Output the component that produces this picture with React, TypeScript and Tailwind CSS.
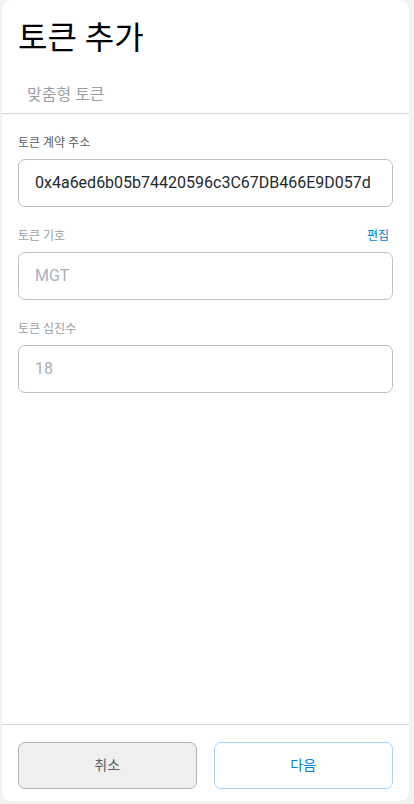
import React from "react";

const font = { fontFamily: "Roboto, 'Noto Sans CJK KR', sans-serif" };

function Field({
  label,
  value,
  dim,
  action,
}: {
  label: string;
  value: string;
  dim?: boolean;
  action?: string;
}) {
  return (
    <div className="flex flex-col">
      <div className="flex h-4 items-center justify-between">
        <span className={`text-[12px] ${dim ? "text-[#9a9fa5]" : "text-[#5b5f63]"}`}>{label}</span>
        {action && <span className="mr-[4px] text-[12px] text-[#037dd6]">{action}</span>}
      </div>
      <div className="mt-2 flex h-[48px] items-center rounded-[7px] border border-[#bbc0c5] bg-white pl-4">
        <span className={`text-[16px] ${dim ? "text-[#a9b0b7]" : "text-[#24292e]"}`}>{value}</span>
      </div>
    </div>
  );
}

export default function App() {
  return (
    <div className="min-h-[804px] w-[414px] bg-[#f2f2f2] pl-[2px]" style={font}>
      <div className="flex h-[801px] w-[407px] flex-col rounded-[9px] bg-white">
        <div className="px-4 pt-[18px]">
          <h1 className="text-[32px] leading-[40px] text-black">토큰 추가</h1>
        </div>
        <div className="mt-[25px] border-b border-[#d6d9dc] pb-[6px] pl-[25px]">
          <span className="text-[16px] leading-6 text-[#9a9fa5]">맞춤형 토큰</span>
        </div>
        <div className="flex flex-1 flex-col gap-[21px] px-4 pt-[21px]">
          <Field label="토큰 계약 주소" value="0x4a6ed6b05b74420596c3C67DB466E9D057d" />
          <Field label="토큰 기호" value="MGT" dim action="편집" />
          <Field label="토큰 십진수" value="18" dim />
        </div>
        <div className="flex gap-[17px] border-t border-[#d6d9dc] px-4 pb-[12px] pt-[17px]">
          <button className="flex h-[47px] w-[179px] items-center justify-center rounded-[7px] border border-[#b5b5b5] bg-[#efefef] text-[14px] text-[#5b5f63]">
            취소
          </button>
          <button className="flex h-[47px] w-[180px] items-center justify-center rounded-[7px] border border-[#a8d6f7] bg-white text-[14px] text-[#037dd6]">
            다음
          </button>
        </div>
      </div>
    </div>
  );
}
